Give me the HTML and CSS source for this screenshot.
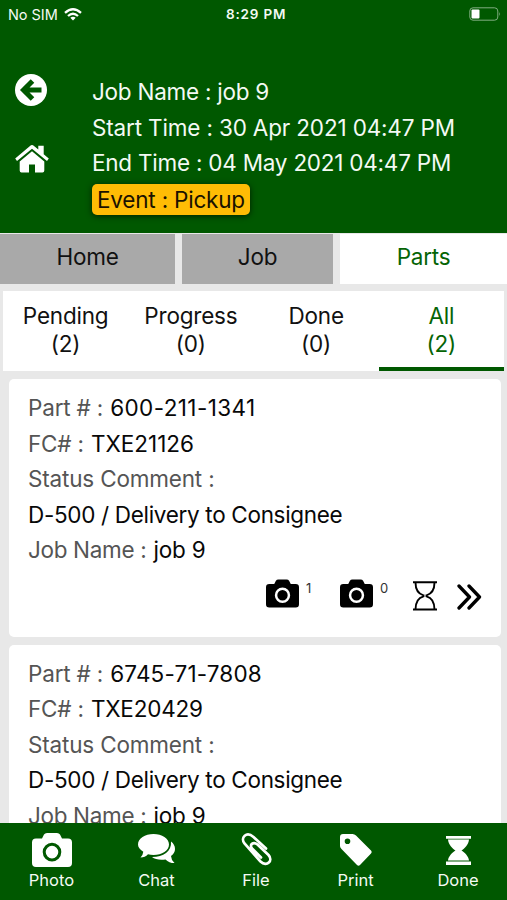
FILE: index.html
```html
<!DOCTYPE html>
<html lang="en">
<head>
<meta charset="utf-8">
<title>Parts</title>
<link rel="stylesheet" href="styles.css">
</head>
<body>
<svg class="defs" width="0" height="0" aria-hidden="true">
  <symbol id="camera" viewBox="0 0 40 34"><path fill-rule="evenodd" d="M4 5.500H10L12 1.500Q13 0 15 0H25Q27 0 28 1.500L30 5.500H36Q40 5.500 40 9.500V30Q40 34 36 34H4Q0 34 0 30V9.500Q0 5.500 4 5.500ZM20 9.800A9.300 9.300 0 1 0 20 28.400A9.300 9.300 0 1 0 20 9.800ZM20 12.800A6.300 6.300 0 1 1 20 25.400A6.300 6.300 0 1 1 20 12.800Z"/></symbol>
</svg>
<div class="screen">
  <header class="top">
    <div class="status">
      <span class="carrier">No SIM</span>
      <svg class="wifi" viewBox="0 0 18 13"><g fill="none" stroke="#fff" stroke-width="2.300"><path d="M1 4.900Q9-2.300 17 4.900"/><path d="M4 8Q9 3.600 14 8"/></g><path fill="#fff" d="M6.300 9.800Q9 7.600 11.700 9.800L9 12.500Z"/></svg>
      <span class="clock">8:29 PM</span>
      <svg class="battery" viewBox="0 0 32 14"><rect x=".8" y=".8" width="28" height="12.400" rx="3.200" fill="none" stroke="#80ad80" stroke-width="1"/><rect x="2.500" y="2.500" width="8" height="9" rx="1" fill="#fff"/><path d="M30.300 5Q32 7 30.300 9Z" fill="#80ad80"/></svg>
    </div>
    <div class="info">
      <nav class="side">
        <svg class="back" viewBox="0 0 32 32"><circle cx="16" cy="16" r="16" fill="#fff"/><path d="M17.500 7L8.500 16L17.500 25M9.500 16H26.500" fill="none" stroke="#005800" stroke-width="5"/></svg>
        <svg class="house" viewBox="0 0 34 28"><g fill="#fff"><path d="M17 6.300L29.300 16.500V25.500Q29.300 27.500 27.500 27.500H20V19.500H14V27.500H6.500Q4.700 27.500 4.700 25.500V16.500Z"/><path d="M15 .9Q17-.7 19 .9L23.300 4.500V.8H28.700V9.200L33.800 13.500L32 15.900L17 3.700L2 15.900L.2 13.500Z"/></g></svg>
      </nav>
      <div class="details">
        <p class="l1">Job Name : job 9</p>
        <p class="l2">Start Time : 30 Apr 2021 04:47 PM</p>
        <p class="l3">End Time : 04 May 2021 04:47 PM</p>
        <p class="event">Event : Pickup</p>
      </div>
    </div>
  </header>
  <nav class="tabs"><span>Home</span><span>Job</span><span class="on">Parts</span></nav>
  <nav class="filters">
    <span>Pending<br>(2)</span><span>Progress<br>(0)</span><span>Done<br>(0)</span><span class="on">All<br>(2)</span>
  </nav>
  <main class="list">
    <article class="card">
      <p><span class="k k1">Part # :</span><b class="wide">600-211-1341</b></p>
      <p><span class="k k2">FC# :</span><b>TXE21126</b></p>
      <p><span class="k k3">Status Comment :</span></p>
      <p><b class="tight">D-500 / Delivery to Consignee</b></p>
      <p><span class="k k5">Job Name :</span><b class="job">job 9</b></p>
      <div class="actions">
        <svg class="cam"><use href="#camera"/></svg><sup>1</sup>
        <svg class="cam"><use href="#camera"/></svg><sup>0</sup>
        <svg class="glass" viewBox="0 0 24 30" fill="none" stroke="#000"><path stroke-width="2" d="M0 1.300H24M0 28.500H24"/><path stroke-width="1.900" d="M2.500 1.500C2.500 9 6 13 10.500 14.300V15.300C6 16.500 2.500 21 2.500 28.500M21.500 1.500C21.500 9 18 13 13.500 14.300V15.300C18 16.500 21.500 21 21.500 28.500"/></svg>
        <svg class="more" viewBox="0 0 25 26" fill="none" stroke="#000" stroke-width="3.300" stroke-linecap="round" stroke-linejoin="round"><path d="M2 2L12.500 13L2 24M12 2L22.500 13L12 24"/></svg>
      </div>
    </article>
    <article class="card">
      <p><span class="k k1">Part # :</span><b class="part2">6745-71-7808</b></p>
      <p><span class="k k2">FC# :</span><b class="fc2">TXE20429</b></p>
      <p><span class="k k3">Status Comment :</span></p>
      <p><b class="tight">D-500 / Delivery to Consignee</b></p>
      <p><span class="k k5">Job Name :</span><b class="job">job 9</b></p>
    </article>
  </main>
  <footer class="bottom">
    <a><svg class="photo"><use href="#camera"/></svg>Photo</a>
    <a><svg class="chat" viewBox="0 0 38 30"><path d="M15.500 0C24 0 31 4.500 31 10.500S24 21 15.500 21Q12.500 21 10 20.200Q7 23.500 2.500 23.500Q5 21 5.300 17.800Q0 14.500 0 10.500C0 4.500 7 0 15.500 0Z"/><path d="M33 7.500Q37 10.500 37 15Q37 19 33 22Q33.200 26 36.500 29Q31 29 27.500 25.400Q18.500 26.500 14 22.900C25 23 34 17.500 33 7.500Z"/></svg>Chat</a>
    <a><svg class="clip" viewBox="0 0 31 33"><path fill="none" stroke="#fff" stroke-width="2.700" stroke-linecap="round" d="M25 15.500L12.500 4C5.500-2-1 4.500 3.500 10.500L19.500 28.500C26 34.500 32.500 27.500 27.500 22L16.500 11.500C12 8 8 12 11 15.500L20 24.500"/></svg>File</a>
    <a><svg class="tag" viewBox="0 0 32 32"><path fill-rule="evenodd" d="M3 0H12.500Q14.500 0 16 1.500L31 16.500Q32.300 18 31 19.500L20 31Q18.500 32.300 17 31L1.500 15Q0 13.500 0 12V3Q0 0 3 0ZM7.500 4.500A2.800 2.800 0 1 0 7.500 10.100A2.800 2.800 0 1 0 7.500 4.500Z"/></svg>Print</a>
    <a><svg class="sand" viewBox="0 0 25 29"><path d="M0 0H25V2.800H0ZM2 3.500H23C22.500 9 18.500 12.500 15.500 14.500C18.500 16.500 22.500 20 23 24.500H2C2.500 20 6.500 16.500 9.500 14.500C6.500 12.500 2.500 9 2 3.500ZM0 25.500H25V29H0Z"/></svg>Done</a>
  </footer>
</div>
</body>
</html>
```

FILE: styles.css
```css
* { box-sizing: border-box; }
body { margin: 0; font-family: Inter, "Liberation Sans", sans-serif; }
p { margin: 0; white-space: nowrap; }
svg { display: block; flex: none; }
.defs { position: absolute; }
.screen { width: 507px; height: 900px; overflow: hidden; display: flex; flex-direction: column; background: #e8e8e8; font-size: 22.5px; color: #111; }
.top { height: 233px; flex: none; background: #005800; color: #f4faf4; }
.status { height: 28px; display: grid; grid-template-columns: 64px 162px 1fr 38px; align-items: center; font-size: 14.500px; }
.status .carrier { padding-left: 8px; white-space: nowrap; letter-spacing: -.05px; }
.wifi { width: 18px; height: 13px; }
.status .clock { grid-column: 3; font-weight: 600; font-size: 13.500px; letter-spacing: .8px; }
.battery { width: 32px; height: 14px; }
.info { display: flex; }
.side { width: 92px; padding: 46px 0 0 15px; }
.back { width: 32px; height: 32px; }
.house { width: 34px; height: 28px; margin-top: 39px; }
.details { padding-top: 46px; line-height: 35.500px; }
.l1 { letter-spacing: -.25px; }
.l2 { letter-spacing: -.16px; }
.l3 { letter-spacing: -.23px; }
.event { width: 158px; height: 31px; margin-top: 3px; padding-left: 5px; line-height: 31px; letter-spacing: -.2px; border-radius: 5px; background: #ffbc05; color: #1a1200; box-shadow: 0 1px 6px rgba(0,0,0,.65); }
.tabs { height: 50px; margin-top: 1px; flex: none; display: grid; grid-template-columns: 175px 151px 1fr; gap: 7px; text-align: center; line-height: 46px; letter-spacing: -.25px; }
.tabs span { background: #a9a9a9; }
.tabs .on { background: #fff; color: #056405; }
.filters { height: 80px; margin: 7px 3px 8px; flex: none; display: grid; grid-template-columns: repeat(4, 1fr); background: #fff; text-align: center; line-height: 28px; letter-spacing: -.2px; }
.filters span { padding-top: 11px; }
.filters .on { color: #056405; border-bottom: 4px solid #005800; }
.list { flex: 1; min-height: 0; overflow: hidden; padding: 0 6px 0 9px; }
.card { height: 258px; margin-bottom: 7.500px; padding: 11px 19px 0; background: #fff; border-radius: 5px; line-height: 35.500px; }
.card p { display: flex; }
.card b { font-weight: 400; color: #080808; }
.card .wide { letter-spacing: .4px; }
.card .part2 { letter-spacing: .18px; }
.card .fc2 { letter-spacing: -.2px; }
.card .tight { letter-spacing: -.32px; }
.card .job { letter-spacing: -.15px; }
.k { color: #555; margin-right: 7px; letter-spacing: -.18px; }
.k5 { letter-spacing: -.33px; }
.actions { display: flex; margin-top: 11px; padding-left: 238px; height: 36px; }
.cam { width: 33px; height: 29px; }
sup { width: 41px; padding-left: 7px; font-size: 13px; line-height: 18px; color: #333; }
.glass { width: 24px; height: 30px; margin: 2px 20px 0 -1px; }
.more { width: 25px; height: 26px; margin-top: 5px; }
.bottom { height: 77px; flex: none; display: grid; grid-template-columns: 103px 107px 92px 107px 98px; background: #005800; color: #f4faf4; fill: #fff; font-size: 16.500px; line-height: 20px; }
.bottom a { display: flex; flex-direction: column; align-items: center; justify-content: flex-end; padding-bottom: 10px; }
.photo { width: 40px; height: 34px; margin-bottom: 3px; }
.chat { width: 38px; height: 30px; margin-bottom: 6px; }
.clip { width: 31px; height: 33px; margin-bottom: 4px; }
.tag { width: 32px; height: 32px; margin-bottom: 4px; }
.sand { width: 25px; height: 29px; margin-bottom: 5px; }
```
